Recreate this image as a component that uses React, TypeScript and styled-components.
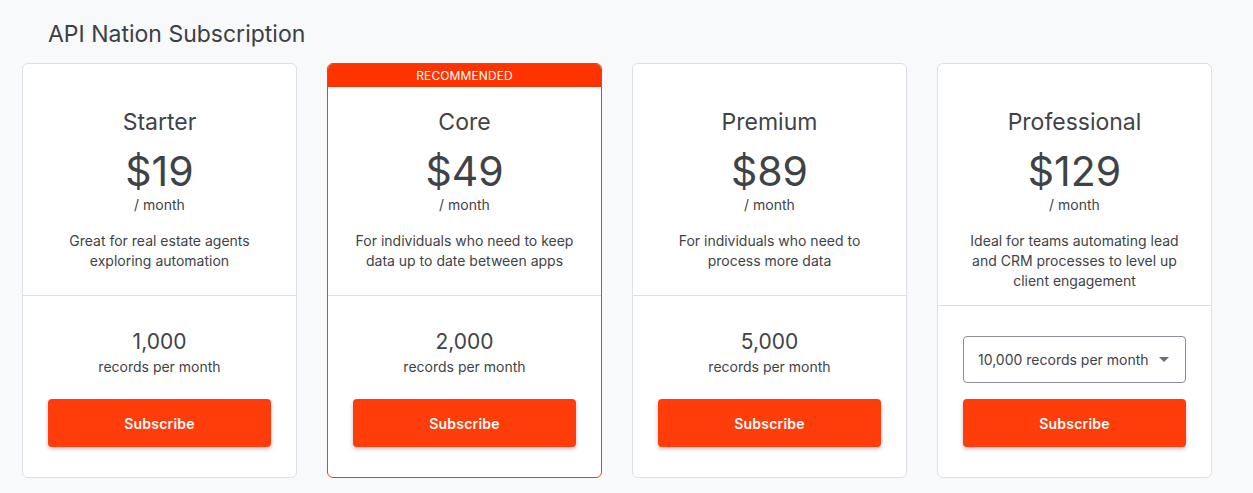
import React from "react";
import styled, { createGlobalStyle } from "styled-components";

const GlobalStyle = createGlobalStyle`
  html, body {
    margin: 0;
    padding: 0;
    background: #f8f9fb;
    font-family: Inter, "Noto Sans", Roboto, sans-serif;
    color: #3f4348;
  }
`;

type Plan = {
  name: string;
  price: string;
  description: string;
  records?: string;
  options?: string[];
  recommended?: boolean;
};

const plans: Plan[] = [
  {
    name: "Starter",
    price: "$19",
    description: "Great for real estate agents exploring automation",
    records: "1,000"
  },
  {
    name: "Core",
    price: "$49",
    description: "For individuals who need to keep data up to date between apps",
    records: "2,000",
    recommended: true
  },
  {
    name: "Premium",
    price: "$89",
    description: "For individuals who need to process more data",
    records: "5,000"
  },
  {
    name: "Professional",
    price: "$129",
    description:
      "Ideal for teams automating lead and CRM processes to level up client engagement",
    options: ["10,000 records per month", "25,000 records per month"]
  }
];

const App: React.FunctionComponent = () => {
  return (
    <Page>
      <GlobalStyle />
      <Title>API Nation Subscription</Title>
      <Grid>
        {plans.map(plan => (
          <Card key={plan.name} highlighted={!!plan.recommended}>
            {plan.recommended && <Banner>Recommended</Banner>}
            <Top>
              <PlanName>{plan.name}</PlanName>
              <Price>{plan.price}</Price>
              <Period>/ month</Period>
              <Description>{plan.description}</Description>
            </Top>
            <Bottom>
              {plan.options ? (
                <SelectBox>
                  <span>{plan.options[0]}</span>
                  <Caret />
                </SelectBox>
              ) : (
                <Records>
                  <RecordCount>{plan.records}</RecordCount>
                  <RecordLabel>records per month</RecordLabel>
                </Records>
              )}
              <SubscribeButton>Subscribe</SubscribeButton>
            </Bottom>
          </Card>
        ))}
      </Grid>
    </Page>
  );
};

export default App;

const Page = styled.div`
  padding: 19px 22px 16px;
`;

const Title = styled.h1`
  margin: 0 0 14px 26px;
  font-size: 23px;
  line-height: 30px;
  font-weight: 400;
  color: #3c4045;
`;

const Grid = styled.div`
  display: grid;
  grid-template-columns: repeat(4, 275px);
  column-gap: 30px;
`;

const Card = styled.div<{ highlighted: boolean }>`
  position: relative;
  display: flex;
  flex-direction: column;
  background: #ffffff;
  border: 1px solid ${({ highlighted }) => (highlighted ? "#e8401c" : "#dcdfe4")};
  border-radius: 6px;
  overflow: hidden;
`;

const Banner = styled.div`
  position: absolute;
  top: 0;
  left: 0;
  right: 0;
  height: 23px;
  line-height: 23px;
  background: #ff3300;
  color: #ffffff;
  font-size: 12px;
  text-align: center;
  text-transform: uppercase;
  letter-spacing: 0.1px;
`;

const Top = styled.div`
  display: flex;
  flex-direction: column;
  align-items: center;
  padding: 43px 24px 14px;
  border-bottom: 1px solid #dcdfe4;
  text-align: center;
`;

const PlanName = styled.div`
  font-size: 23px;
  line-height: 30px;
`;

const Price = styled.div`
  margin-top: 10px;
  font-size: 41px;
  line-height: 48px;
`;

const Period = styled.div`
  font-size: 14px;
  line-height: 20px;
`;

const Description = styled.div`
  margin-top: 16px;
  min-height: 50px;
  font-size: 14px;
  line-height: 20px;
  max-width: 230px;
`;

const Bottom = styled.div`
  flex: 1;
  display: flex;
  flex-direction: column;
  gap: 16px;
  padding: 30px 25px 30px 25px;
`;

const Records = styled.div`
  padding-top: 1px;
  text-align: center;
`;

const RecordCount = styled.div`
  font-size: 21px;
  line-height: 30px;
`;

const RecordLabel = styled.div`
  font-size: 14px;
  line-height: 20px;
`;

const SelectBox = styled.div`
  display: flex;
  align-items: center;
  justify-content: space-between;
  height: 45px;
  padding: 0 16px 0 14px;
  border: 1px solid #8a8e95;
  border-radius: 4px;
  font-size: 14px;
  color: #3f4348;
`;

const Caret = styled.span`
  width: 0;
  height: 0;
  border-left: 5px solid transparent;
  border-right: 5px solid transparent;
  border-top: 5px solid #6b6f75;
`;

const SubscribeButton = styled.button`
  margin-top: auto;
  height: 48px;
  border: none;
  border-radius: 4px;
  background: #ff3d0a;
  color: #ffffff;
  font-family: Inter, "Noto Sans", sans-serif;
  font-size: 14px;
  font-weight: 600;
  letter-spacing: 0.2px;
  box-shadow: 0 2px 4px rgba(0, 0, 0, 0.25);
  cursor: pointer;
`;
